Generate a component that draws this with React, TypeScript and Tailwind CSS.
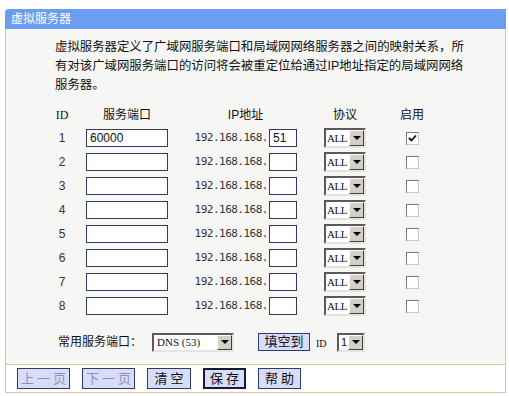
import { ReactNode } from 'react';

const rows = [1, 2, 3, 4, 5, 6, 7, 8];

function DropButton() {
  return (
    <div className="flex w-[15px] shrink-0 h-full items-center justify-center bg-[#d4d0c8] border border-t-white border-l-white border-b-[#404040] border-r-[#404040]">
      <div className="w-0 h-0 border-x-[4px] border-x-transparent border-t-[4px] border-t-black" />
    </div>
  );
}

function Select({ value, className, textClass }: { value: string; className: string; textClass?: string }) {
  return (
    <div
      className={`flex bg-white border-2 border-t-[#5a5a5a] border-l-[#5a5a5a] border-b-[#e4e4e4] border-r-[#e4e4e4] ${className}`}
    >
      <div className={`flex-1 flex items-center whitespace-nowrap ${textClass ?? ''}`}>{value}</div>
      <DropButton />
    </div>
  );
}

function Checkbox({ checked }: { checked?: boolean }) {
  return (
    <div className="w-[13px] h-[13px] bg-white border border-t-[#7a7a7a] border-l-[#7a7a7a] border-b-[#c8c8c8] border-r-[#c8c8c8] flex items-center justify-center">
      {checked && (
        <svg width="9" height="9" viewBox="0 0 9 9">
          <path d="M1 4 L3.5 6.5 L8 1.5" stroke="#111" strokeWidth="1.8" fill="none" />
        </svg>
      )}
    </div>
  );
}

function Btn({ children, w, disabled, strong }: { children: ReactNode; w: string; disabled?: boolean; strong?: boolean }) {
  return (
    <div
      className={`h-[21px] ${w} flex items-center justify-center bg-[#d9dcf7] text-[13px] tracking-[3px] pl-[3px] ${
        strong ? 'border-2 border-[#141c33]' : 'border border-[#2c3a72]'
      } ${disabled ? 'text-[#8d92b8]' : 'text-[#111]'}`}
    >
      {children}
    </div>
  );
}

export default function App() {
  return (
    <div className="w-[509px] h-[396px] bg-white pt-[9px] pl-[5px] font-['Liberation_Sans','Noto_Sans_CJK_SC',sans-serif] text-[#111]">
      <div className="w-[501px]">
        <div className="h-[20px] bg-[#6b9df3] rounded-tl-[4px] pl-[6px] text-white text-[12px] leading-[20px]">
          虚拟服务器
        </div>

        <div className="h-[336px] bg-[#f6f6f5] border-x border-b border-[#dcc596]">
          <div className="pt-[9px] pl-[49px] text-[12.4px] leading-[19px] whitespace-nowrap">
            虚拟服务器定义了广域网服务端口和局域网网络服务器之间的映射关系，所
            <br />
            有对该广域网服务端口的访问将会被重定位给通过IP地址指定的局域网网络
            <br />
            服务器。
          </div>

          <div className="mt-[9px] flex items-center h-[22px] text-[12px]">
            <div className="ml-[46px] w-[20px] text-center font-['Liberation_Serif',serif]">ID</div>
            <div className="ml-[14px] w-[82px] text-center">服务端口</div>
            <div className="w-[129px] pl-[26px] text-center">IP地址</div>
            <div className="ml-[27px] w-[42px] text-center">协议</div>
            <div className="ml-[34px] w-[24px] text-center">启用</div>
          </div>

          {rows.map((n) => (
            <div key={n} className="flex items-center h-[24px] text-[12px]">
              <div className="ml-[46px] w-[20px] text-center text-[#333]">{n}</div>
              <div className="ml-[14px] w-[82px] h-[18px] bg-white border border-[#2e3d5e] pl-[3px] leading-[16px] text-[12px]">
                {n === 1 ? '60000' : ''}
              </div>
              <div className="w-[100px] text-right font-['DejaVu_Sans_Mono',monospace] text-[11px] tracking-[-0.5px] text-[#333]">
                192.168.168.
              </div>
              <div className="ml-[1px] w-[28px] h-[18px] bg-white border border-[#2e3d5e] pl-[3px] leading-[16px] text-[12px]">
                {n === 1 ? '51' : ''}
              </div>
              <Select
                value="ALL"
                className="ml-[27px] w-[42px] h-[20px]"
                textClass="pl-[1px] font-['Liberation_Serif',serif] text-[11px] tracking-[-0.5px]"
              />
              <div className="ml-[34px] w-[24px] flex justify-center">
                <Checkbox checked={n === 1} />
              </div>
            </div>
          ))}

          <div className="mt-[12px] flex items-center h-[24px] text-[12px]">
            <div className="ml-[52px] w-[94px]">常用服务端口：</div>
            <Select
              value="DNS (53)"
              className="w-[82px] h-[19px]"
              textClass="font-['Liberation_Serif',serif] text-[11px] pl-[3px]"
            />
            <div className="ml-[24px] w-[52px] h-[18px] flex items-center justify-center bg-[#d9dcf7] border border-[#2c3a72] text-[13px]">
              填空到
            </div>
            <div className="ml-[6px] w-[21px] font-['Liberation_Serif',serif] text-[10px] pt-[3px]">ID</div>
            <Select value="1" className="w-[28px] h-[19px]" textClass="pl-[2px] text-[11px]" />
          </div>
        </div>

        <div className="h-[28px] border-x border-b border-[#dcc596] bg-white pt-[3px] pl-[11px] flex gap-[12px] items-start">
          <Btn w="w-[53px]" disabled>
            上一页
          </Btn>
          <Btn w="w-[53px]" disabled>
            下一页
          </Btn>
          <Btn w="w-[44px]">清空</Btn>
          <Btn w="w-[43px]" strong>
            保存
          </Btn>
          <Btn w="w-[43px]">帮助</Btn>
        </div>
      </div>
    </div>
  );
}
